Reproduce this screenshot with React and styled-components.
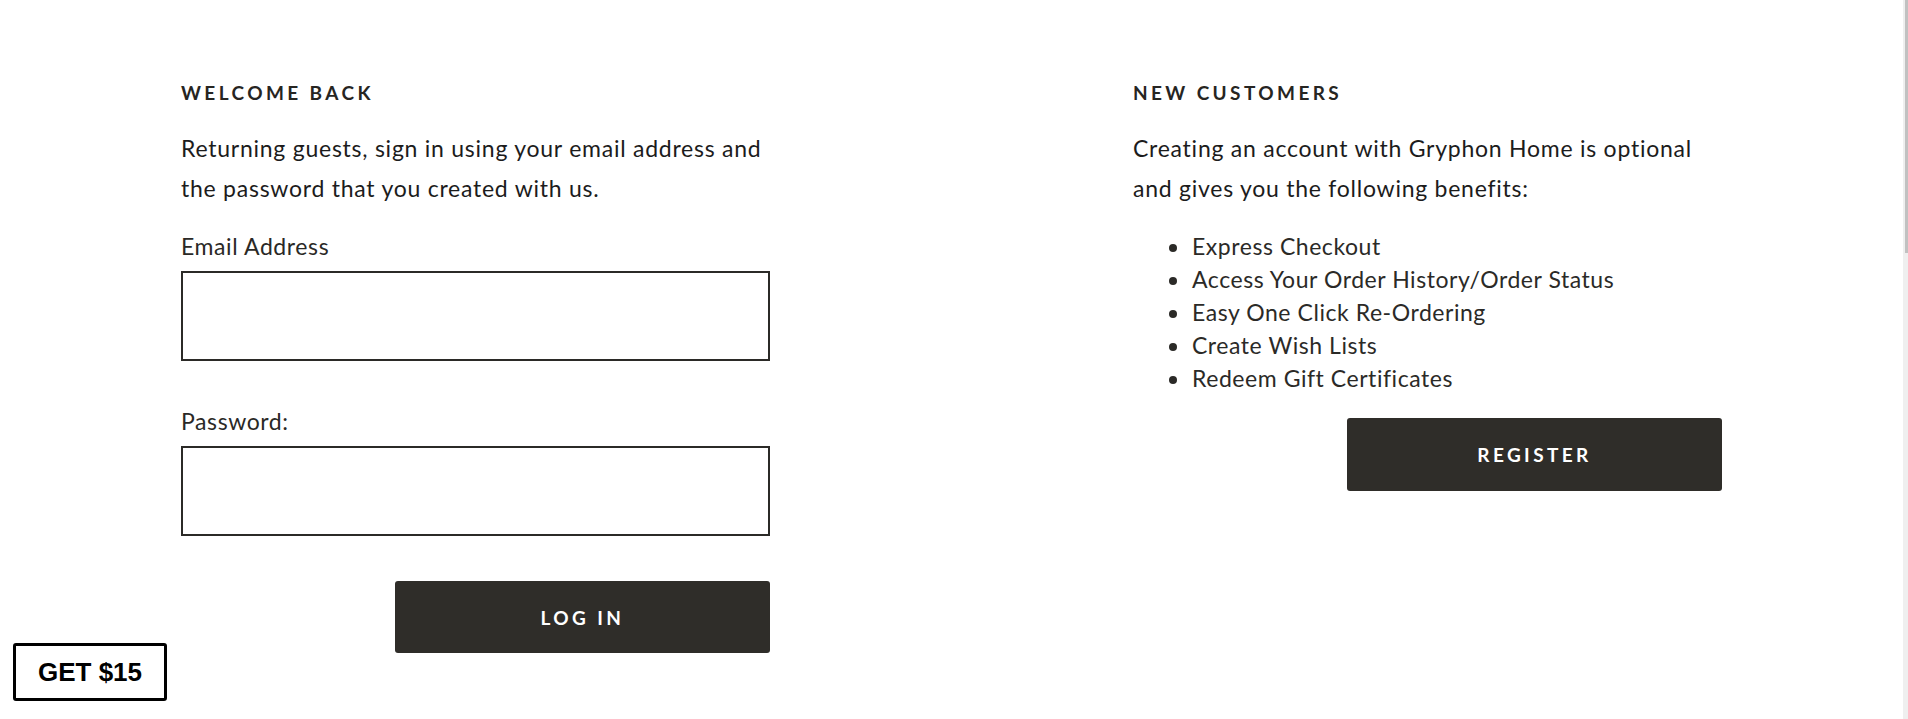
import React from 'react'
import styled, { createGlobalStyle } from 'styled-components'

const GlobalStyle = createGlobalStyle`
    html, body {
        margin: 0;
        padding: 0;
        background: #ffffff;
    }

    body {
        font-family: Lato, "Open Sans", sans-serif;
        color: #1c1c1c;
    }
`

const Page = styled.main`
    padding: 82px 0 40px 181px;
`

const Container = styled.div`
    width: 1541px;
    display: flex;
    justify-content: space-between;
    align-items: flex-start;
`

const Column = styled.section`
    width: 589px;
    display: flex;
    flex-direction: column;
`

const Heading = styled.h2`
    margin: 0;
    font-size: 19px;
    line-height: 21px;
    font-weight: 700;
    letter-spacing: 3.4px;
    text-transform: uppercase;
    color: #262522;
`

const Intro = styled.p`
    margin: 25px 0 0;
    font-size: 23px;
    line-height: 40px;
    font-weight: 400;
    letter-spacing: 0.75px;
    color: #1c1c1c;
`

const Field = styled.label`
    display: flex;
    flex-direction: column;
    margin-top: ${props => props.$first ? '24px' : '46px'};
`

const FieldLabel = styled.span`
    font-size: 23px;
    line-height: 28px;
    letter-spacing: 0.6px;
    color: #2a2926;
    margin-bottom: 11px;
`

const Input = styled.input`
    height: 90px;
    box-sizing: border-box;
    border: 2px solid #2b2a27;
    border-radius: 0;
    padding: 0 16px;
    font-family: inherit;
    font-size: 20px;
    outline: none;
    background: #fff;
`

const Actions = styled.div`
    display: flex;
    justify-content: flex-end;
    margin-top: ${props => props.$top || '45px'};
`

const Button = styled.button`
    width: 375px;
    height: ${props => props.$tall ? '73px' : '72px'};
    border: none;
    border-radius: 3px;
    background: #2f2d29;
    color: #ffffff;
    font-family: Lato, sans-serif;
    font-weight: 700;
    font-size: 19px;
    letter-spacing: 3.4px;
    text-transform: uppercase;
    cursor: pointer;
`

const Benefits = styled.ul`
    margin: 22px 0 0;
    padding-left: 58px;
    list-style: disc;
`

const Benefit = styled.li`
    font-size: 23px;
    line-height: 33px;
    font-weight: 400;
    letter-spacing: 0.55px;
    color: #2b2a27;
    padding-left: 1px;

    &::marker {
        color: #2b2a27;
    }
`

const PromoBadge = styled.button`
    position: fixed;
    left: 13px;
    bottom: 18px;
    width: 154px;
    height: 58px;
    border: 3px solid #000;
    border-radius: 3px;
    background: #fff;
    color: #000;
    font-family: "Liberation Sans", Arial, sans-serif;
    font-weight: 700;
    font-size: 26px;
    padding: 0;
    cursor: pointer;
`

const ScrollRail = styled.div`
    position: fixed;
    top: 0;
    right: 0;
    width: 5px;
    height: 100vh;
    background: #efefef;
    display: flex;
    justify-content: flex-end;
`

const ScrollThumb = styled.div`
    width: 3px;
    height: 253px;
    background: #c1c1c1;
`

const benefits = [
    'Express Checkout',
    'Access Your Order History/Order Status',
    'Easy One Click Re-Ordering',
    'Create Wish Lists',
    'Redeem Gift Certificates',
]

const App = () => {
    return (
        <>
            <GlobalStyle />
            <Page>
                <Container>
                    <Column>
                        <Heading>Welcome Back</Heading>
                        <Intro>
                            Returning guests, sign in using your email address and the password that you created with us.
                        </Intro>
                        <Field $first>
                            <FieldLabel>Email Address</FieldLabel>
                            <Input type="email" />
                        </Field>
                        <Field>
                            <FieldLabel>Password:</FieldLabel>
                            <Input type="password" />
                        </Field>
                        <Actions>
                            <Button>Log In</Button>
                        </Actions>
                    </Column>
                    <Column>
                        <Heading>New Customers</Heading>
                        <Intro>
                            Creating an account with Gryphon Home is optional and gives you the following benefits:
                        </Intro>
                        <Benefits>
                            {benefits.map(item => <Benefit key={item}>{item}</Benefit>)}
                        </Benefits>
                        <Actions $top="23px">
                            <Button $tall>Register</Button>
                        </Actions>
                    </Column>
                </Container>
            </Page>
            <PromoBadge>GET $15</PromoBadge>
            <ScrollRail>
                <ScrollThumb />
            </ScrollRail>
        </>
    )
}

export default App
